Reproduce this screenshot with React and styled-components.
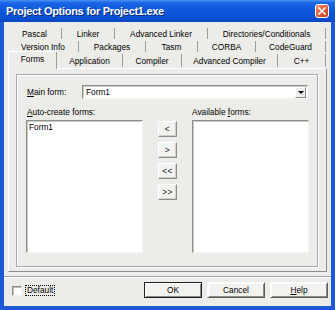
import React from 'react';
import styled, { createGlobalStyle } from 'styled-components';

const Global = createGlobalStyle`
  html, body { margin: 0; padding: 0; background: #ffffff; }
  body { font-family: "Liberation Sans", Arial, sans-serif; }
  * { box-sizing: border-box; }
`;

const FACE = '#ECECE8';

const Window = styled.div`
  width: 335px;
  height: 310px;
  display: flex;
  flex-direction: column;
  background: #1f58d4;
`;

const TitleBar = styled.div`
  height: 22px;
  flex: 0 0 22px;
  display: flex;
  align-items: center;
  padding: 0 5px 0 6px;
  background: linear-gradient(#4a93f6 0%, #1b67e6 12%, #0c58dc 45%, #0a50d2 80%, #0b47c4 100%);
`;

const Title = styled.div`
  flex: 1;
  color: #ffffff;
  font-family: "Liberation Sans", Arial, sans-serif;
  font-weight: bold;
  font-size: 11px;
  letter-spacing: -0.3px;
  text-shadow: 1px 1px 0 #0a2a7a;
  white-space: nowrap;
`;

const CloseBtn = styled.div`
  width: 14px;
  height: 14px;
  margin-right: 1px;
  border: 1px solid #ffffff;
  border-radius: 3px;
  background: linear-gradient(135deg, #f09a7e 0%, #e4603c 40%, #c8401e 100%);
  display: flex;
  align-items: center;
  justify-content: center;
`;

const Body = styled.div`
  flex: 1;
  margin: 0 4px 4px 4px;
  background: ${FACE};
  display: flex;
  flex-direction: column;
  padding-top: 5px;
  padding-bottom: 8px;
`;

const TabControl = styled.div`
  flex: 1;
  margin: 0 4px;
  display: flex;
  flex-direction: column;
`;

const TabRow = styled.div`
  display: flex;
  height: ${p => (p.$front ? 15 : 13)}px;
  flex: 0 0 auto;
  padding-right: 1px;
`;

const Tab = styled.div`
  flex: 0 0 ${p => p.$w}px;
  display: flex;
  align-items: center;
  justify-content: center;
  font-size: 8.3px;
  color: #000;
  white-space: nowrap;
  margin: ${p => (p.$active ? '-2px 0 -1px 0' : '1px 0 1px 0')};
  padding-bottom: ${p => (p.$active ? 4 : 0)}px;
  position: relative;
  z-index: ${p => (p.$active ? 1 : 0)};
  background: ${FACE};
  border-right: 1px solid #9c9c98;
  border-left: ${p => (p.$active ? '1px solid #ffffff' : '0')};
  border-top: ${p => (p.$active ? '1px solid #ffffff' : '0')};
  border-radius: ${p => (p.$active ? '2px 2px 0 0' : '0')};
`;

const Page = styled.div`
  flex: 1;
  display: flex;
  border-top: 1px solid #ffffff;
  border-left: 1px solid #ffffff;
  border-right: 1px solid #8e8e8a;
  border-bottom: 1px solid #8e8e8a;
  padding: 5px 8px 4px 7px;
`;

const Frame = styled.div`
  flex: 1;
  display: flex;
  flex-direction: column;
  border: 1px solid #a8a8a4;
  box-shadow: inset 1px 1px 0 #ffffff, 1px 1px 0 #ffffff;
  padding: 10px 8px 13px 9px;
`;

const FieldRow = styled.div`
  display: flex;
  align-items: center;
  height: 14px;
`;

const Label = styled.div`
  font-size: 8.3px;
  color: #000;
  white-space: nowrap;
  padding-left: ${p => p.$indent || 0}px;
  width: ${p => (p.$w ? `${p.$w}px` : 'auto')};
  flex: 0 0 auto;
`;

const Combo = styled.div`
  flex: 1;
  height: 14px;
  margin-right: 1px;
  display: flex;
  align-items: center;
  background: #fff;
  border: 1px solid;
  border-color: #8e8e8a #f4f4f2 #f4f4f2 #8e8e8a;
  box-shadow: inset 1px 1px 0 #c8c8c4;
  font-size: 8.3px;
  color: #000;
  padding: 0 1px 0 3px;
`;

const ComboText = styled.span`
  flex: 1;
`;

const DropBtn = styled.div`
  width: 11px;
  height: 11px;
  background: ${FACE};
  border: 1px solid;
  border-color: #ffffff #8a8a86 #8a8a86 #ffffff;
  display: flex;
  align-items: center;
  justify-content: center;
`;

const Arrow = styled.span`
  width: 0;
  height: 0;
  border-left: 3px solid transparent;
  border-right: 3px solid transparent;
  border-top: 3px solid #000;
`;

const Lists = styled.div`
  flex: 1;
  margin-top: 8px;
  display: grid;
  grid-template-columns: 117px 1fr 117px;
  grid-template-rows: 11px 1fr;
  row-gap: 2px;
`;

const ListBox = styled.div`
  background: #fff;
  border: 1px solid;
  border-color: #8e8e8a #f4f4f2 #f4f4f2 #8e8e8a;
  box-shadow: inset 1px 1px 0 #c8c8c4;
  padding: 1px 2px;
  font-size: 8.3px;
  color: #000;
`;

const ListItem = styled.div`
  height: 11px;
  line-height: 11px;
`;

const MoveCol = styled.div`
  display: flex;
  flex-direction: column;
  align-items: center;
  gap: 5px;
  padding-top: 1px;
`;

const SmallBtn = styled.div`
  width: 19px;
  height: 16px;
  display: flex;
  align-items: center;
  justify-content: center;
  background: #f2f2ef;
  border: 1px solid;
  border-color: #ffffff #8c8c88 #8c8c88 #ffffff;
  box-shadow: inset -1px -1px 0 #cfcfcb;
  font-size: 8.3px;
  color: #222;
  letter-spacing: 0.5px;
`;

const Separator = styled.div`
  height: 2px;
  margin-top: 4px;
  border-top: 1px solid #a2a29e;
  border-bottom: 1px solid #ffffff;
`;

const BottomRow = styled.div`
  display: flex;
  align-items: center;
  height: 16px;
  margin-top: 4px;
  padding: 0 3px 0 8px;
`;

const CheckBox = styled.div`
  width: 10px;
  height: 10px;
  background: #fff;
  border: 1px solid;
  border-color: #8e8e8a #f4f4f2 #f4f4f2 #8e8e8a;
  box-shadow: inset 1px 1px 0 #b8b8b4;
  margin-top: 1px;
`;

const CheckLabel = styled.div`
  margin-left: 3px;
  border: 1px dotted #000;
  padding: 0 1px;
  font-size: 8.3px;
  color: #000;
  height: 11px;
  line-height: 9px;
  margin-top: 1px;
`;

const Spacer = styled.div`
  flex: 1;
`;

const Buttons = styled.div`
  display: flex;
  gap: 5px;
`;

const Button = styled.div`
  width: 58px;
  height: 16px;
  display: flex;
  align-items: center;
  justify-content: center;
  font-size: 8.3px;
  color: #000;
  background: #f2f2ef;
  border: 1px solid ${p => (p.$default ? '#202020' : 'transparent')};
  box-shadow: ${p =>
    p.$default
      ? 'inset 1px 1px 0 #ffffff, inset -1px -1px 0 #8c8c88'
      : 'inset 1px 1px 0 #ffffff, inset -1px -1px 0 #8c8c88'};
  border-color: ${p => (p.$default ? '#202020' : '#ffffff #5c5c58 #5c5c58 #ffffff')};
`;

const TABS = [
  [
    { label: 'Pascal', w: 54 },
    { label: 'Linker', w: 53 },
    { label: 'Advanced Linker', w: 93 },
    { label: 'Directories/Conditionals', w: 118 },
  ],
  [
    { label: 'Version Info', w: 71 },
    { label: 'Packages', w: 67 },
    { label: 'Tasm', w: 52 },
    { label: 'CORBA', w: 58 },
    { label: 'CodeGuard', w: 70 },
  ],
  [
    { label: 'Forms', w: 49, active: true },
    { label: 'Application', w: 66 },
    { label: 'Compiler', w: 59 },
    { label: 'Advanced Compiler', w: 96 },
    { label: 'C++', w: 48 },
  ],
];

export default function App() {
  return (
    <>
      <Global />
      <Window>
        <TitleBar>
          <Title>Project Options for Project1.exe</Title>
          <CloseBtn>
            <svg width="8" height="8" viewBox="0 0 8 8">
              <path d="M1 1 L7 7 M7 1 L1 7" stroke="#fff" strokeWidth="1.6" strokeLinecap="square" />
            </svg>
          </CloseBtn>
        </TitleBar>
        <Body>
          <TabControl>
            {TABS.map((row, i) => (
              <TabRow key={i} $front={i === 2}>
                {row.map(t => (
                  <Tab key={t.label} $w={t.w} $active={t.active}>
                    {t.label}
                  </Tab>
                ))}
              </TabRow>
            ))}
            <Page>
              <Frame>
                <FieldRow>
                  <Label $w={56} $indent={1}>
                    <u>M</u>ain form:
                  </Label>
                  <Combo>
                    <ComboText>Form1</ComboText>
                    <DropBtn>
                      <Arrow />
                    </DropBtn>
                  </Combo>
                </FieldRow>
                <Lists>
                  <Label $indent={1}>
                    <u>A</u>uto-create forms:
                  </Label>
                  <div />
                  <Label>
                    Available <u>f</u>orms:
                  </Label>
                  <ListBox>
                    <ListItem>Form1</ListItem>
                  </ListBox>
                  <MoveCol>
                    <SmallBtn>&lt;</SmallBtn>
                    <SmallBtn>&gt;</SmallBtn>
                    <SmallBtn>&lt;&lt;</SmallBtn>
                    <SmallBtn>&gt;&gt;</SmallBtn>
                  </MoveCol>
                  <ListBox />
                </Lists>
              </Frame>
            </Page>
          </TabControl>
          <Separator />
          <BottomRow>
            <CheckBox />
            <CheckLabel>Default</CheckLabel>
            <Spacer />
            <Buttons>
              <Button $default>OK</Button>
              <Button>Cancel</Button>
              <Button>
                <u>H</u>elp
              </Button>
            </Buttons>
          </BottomRow>
        </Body>
      </Window>
    </>
  );
}
